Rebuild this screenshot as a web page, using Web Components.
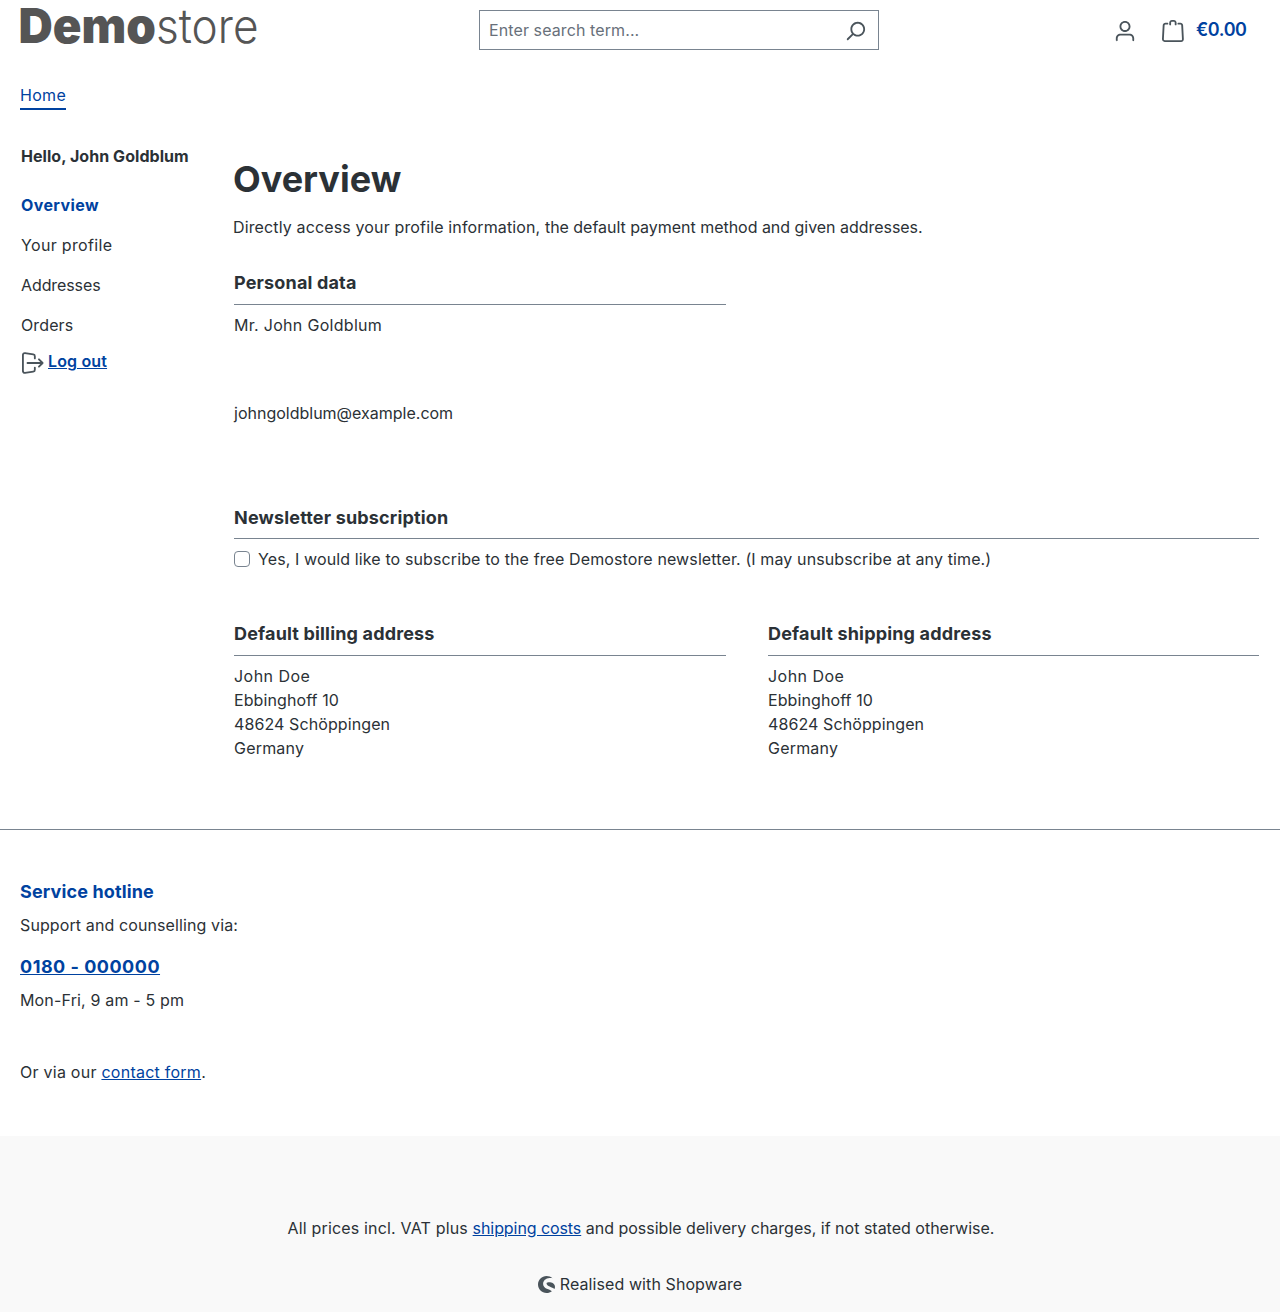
<!DOCTYPE html>
<html lang="en">
<head>
<meta charset="utf-8">
<title>Overview</title>
<style>
body{margin:0;background:#fff;color:#2b3136;font:16px/24px Inter,"Liberation Sans",sans-serif}
</style>
</head>
<body>
<account-page></account-page>
<script>
const define=(name,html)=>{
  const t=document.createElement('template');
  t.innerHTML=html;
  customElements.define(name,class extends HTMLElement{
    constructor(){super();this.attachShadow({mode:'open'}).append(t.content.cloneNode(true));}
  });
};

const ICONS={
  avatar:'<path d="M12 3C9.79 3 8 4.79 8 7s1.79 4 4 4 4-1.79 4-4-1.79-4-4-4zm0-2c3.3137 0 6 2.6863 6 6s-2.6863 6-6 6-6-2.6863-6-6 2.6863-6 6-6zM4 22.099c0 .5523-.4477 1-1 1s-1-.4477-1-1V20c0-2.7614 2.2386-5 5-5h10c2.7614 0 5 2.2386 5 5v2.099c0 .5523-.4477 1-1 1s-1-.4477-1-1V20c0-1.6569-1.3431-3-3-3H7c-1.6569 0-3 1.3431-3 3v2.099z"/>',
  bag:'<path d="M5.892 3c.5523 0 1 .4477 1 1s-.4477 1-1 1H3.7895a1 1 0 0 0-.9986.9475l-.7895 15c-.029.5515.3946 1.0221.9987 1.0525h17.8102c.5523 0 1-.4477.9986-1.0525l-.7895-15A1 1 0 0 0 20.0208 5H17.892c-.5523 0-1-.4477-1-1s.4477-1 1-1h2.1288c1.5956 0 2.912 1.249 2.9959 2.8423l.7894 15c.0035.0788.0035.0788.0042.1577 0 1.6569-1.3432 3-3 3H3c-.079-.0007-.079-.0007-.1577-.0041-1.6546-.0871-2.9253-1.499-2.8382-3.1536l.7895-15C.8775 4.249 2.1939 3 3.7895 3H5.892zm4 2c0 .5523-.4477 1-1 1s-1-.4477-1-1V3c0-1.6569 1.3432-3 3-3h2c1.6569 0 3 1.3431 3 3v2c0 .5523-.4477 1-1 1s-1-.4477-1-1V3c0-.5523-.4477-1-1-1h-2c-.5523 0-1 .4477-1 1v2z"/>',
  search:'<path d="M10.0944 16.3199 4.707 21.707c-.3905.3905-1.0237.3905-1.4142 0-.3905-.3905-.3905-1.0237 0-1.4142L8.68 14.9056C7.6271 13.551 7 11.8487 7 10c0-4.4183 3.5817-8 8-8s8 3.5817 8 8-3.5817 8-8 8c-1.8487 0-3.551-.627-4.9056-1.6801zM15 16c3.3137 0 6-2.6863 6-6s-2.6863-6-6-6-6 2.6863-6 6 2.6863 6 6 6z"/>',
  logout:'<path fill="none" stroke="#4a545b" stroke-width="2" stroke-linecap="round" stroke-linejoin="round" d="M14 7V4.6a2 2 0 0 0-1.7-2L3.3 1.2A2 2 0 0 0 1 3.1v17.8a2 2 0 0 0 2.3 1.9l9-1.4a2 2 0 0 0 1.7-2V17M6 12h16.5M18.5 8l4 4-4 4"/>',
  shopware:'<path d="M20.500 3C18.200 1.100 15.200 0 12 0 5.400 0 0 5.400 0 12s5.400 12 12 12c3 0 5.500-1 7.600-2.600-1.800-1.600-4.600-2.300-7.200-3.400-3-1.200-5.200-3.400-5.200-6.600 0-4.800 3.700-8.300 9-8.600 1.700-.1 3.200-.1 4.300.2z"/><path d="M12 10C14 7.800 24 8.500 24 15.500c0 1.300-.4 2.300-.9 3C20.500 15.600 12 15.200 12 10z"/>'
};
customElements.define('ui-icon',class extends HTMLElement{
  constructor(){super();this.attachShadow({mode:'open'});}
  connectedCallback(){
    this.shadowRoot.innerHTML='<style>:host{display:block;width:22px;height:22px;flex:none}svg{display:block;width:100%;height:100%;fill:#4a545b;overflow:visible}</style><svg viewBox="0 0 24 24">'+ICONS[this.getAttribute('name')]+'</svg>';
  }
});

define('text-link',`<style>:host{display:inline}a{color:#0042a0;text-decoration:underline}</style><a href="#"><slot></slot></a>`);

define('store-logo',`<style>:host{display:block;width:260px;height:64px;margin-left:-8px}svg{display:block;overflow:visible}text{font-family:Inter,sans-serif;font-size:48px;fill:#555}</style>
<svg width="260" height="64"><text x="6.500" y="42.600" font-weight="900" textLength="137.500" lengthAdjust="spacingAndGlyphs">Demo</text><text x="144" y="42.600" font-weight="300" textLength="102.500" lengthAdjust="spacingAndGlyphs">store</text></svg>`);

define('search-box',`<style>:host{display:flex;box-sizing:border-box;width:400px;height:40px;border:1px solid #798490;padding:0 12px 0 9px;align-items:center;justify-content:space-between;color:#68707a;letter-spacing:.1px}ui-icon{margin-top:1px}</style>
<span>Enter search term...</span><ui-icon name="search"></ui-icon>`);

define('store-header',`<style>:host{display:grid;grid-template-columns:459px 400px 1fr;padding:0 33px 0 20px;height:83px;align-items:start;box-sizing:border-box}
search-box{margin-top:10px}.actions{display:flex;justify-content:flex-end;margin-top:18px}.actions ui-icon{margin-top:2px}.actions ui-icon+ui-icon{margin-left:26px}b{box-sizing:border-box;width:63px;white-space:nowrap;color:#0042a0;font-weight:600;font-size:18px;padding-left:12px;letter-spacing:-.4px}</style>
<store-logo></store-logo><search-box></search-box><div class="actions"><ui-icon name="avatar"></ui-icon><ui-icon name="bag"></ui-icon><b>€0.00</b></div>`);

define('main-nav',`<style>:host{display:flex;padding:0 20px;height:61px}a{color:#0042a0;height:25px;border-bottom:2px solid #0042a0;letter-spacing:.3px}</style><a>Home</a>`);

define('account-menu',`<style>:host{display:flex;flex-direction:column;width:192px;flex:none}
.hello{font-weight:700;margin-bottom:25px;white-space:nowrap;letter-spacing:.05px}.item{margin-bottom:16px}.active{color:#0042a0;font-weight:700;letter-spacing:.4px}
.out{display:flex;gap:3px;margin-top:-4px;font-weight:600;letter-spacing:.15px}ui-icon{margin:3px 1px 0 1px}</style>
<div class="hello">Hello, John Goldblum</div><div class="item active">Overview</div><div class="item" style="letter-spacing:.33px">Your profile</div><div class="item" style="letter-spacing:-.1px">Addresses</div><div class="item" style="letter-spacing:.12px">Orders</div>
<div class="out"><ui-icon name="logout"></ui-icon><text-link>Log out</text-link></div>`);

define('info-card',`<style>:host{display:block;min-width:0}.title{font-weight:700;font-size:18px;line-height:27px;padding-bottom:var(--title-pad,8px);border-bottom:1px solid #798490;margin-bottom:8px;letter-spacing:.165px}</style>
<div class="title"><slot name="title"></slot></div><slot></slot>`);

define('check-row',`<style>:host{display:flex;gap:8px;letter-spacing:.115px}i{box-sizing:border-box;width:16px;height:16px;border:1px solid #798490;border-radius:4px;margin-top:4px}</style><i></i><span><slot></slot></span>`);

define('account-overview',`<style>:host{display:block;flex:1;padding-top:8px}
h1{font-size:36px;line-height:54px;font-weight:700;margin:0 0 9px -1px}.lead{margin:0 0 30px -1px;letter-spacing:.055px}
.row{display:grid;grid-template-columns:492px 491px;column-gap:42px}.personal{height:235px}.news{height:116px}.mail{margin-top:64px}.news info-card{width:1025px;--title-pad:7px}
.doe{letter-spacing:.45px}.street{letter-spacing:.1px}.land{letter-spacing:.2px}</style>
<h1>Overview</h1><div class="lead"><span style="letter-spacing:.14px">Directly access your profile information,</span> <span style="letter-spacing:-.03px">the default payment method and given addresses.</span></div>
<div class="row personal"><info-card><span slot="title">Personal data</span><div style="letter-spacing:.3px">Mr. John Goldblum</div><div class="mail">johngoldblum@example.com</div></info-card></div>
<div class="news"><info-card><span slot="title">Newsletter subscription</span><check-row>Yes, I would like to subscribe to the free Demostore newsletter. (I may unsubscribe at any time.)</check-row></info-card></div>
<div class="row"><info-card><span slot="title">Default billing address</span><div class="doe">John Doe</div><div class="street">Ebbinghoff 10</div><div class="street">48624 Schöppingen</div><div class="land">Germany</div></info-card>
<info-card><span slot="title">Default shipping address</span><div class="doe">John Doe</div><div class="street">Ebbinghoff 10</div><div class="street">48624 Schöppingen</div><div class="land">Germany</div></info-card></div>`);

define('store-footer',`<style>:host{display:block;border-top:1px solid #798490}.hotline{height:306px;box-sizing:border-box;padding:48px 20px 0}
.t{font-size:18px;line-height:27px;font-weight:700;color:#0042a0;margin-bottom:8px;letter-spacing:.13px}.phone{font-size:18px;line-height:27px;font-weight:700;margin:16px 0 8px;letter-spacing:.5px}.form{margin-top:48px;letter-spacing:.25px}
.bottom{background:#f9f9f9;height:176px;box-sizing:border-box;padding-top:80px;text-align:center}.prices{padding-left:2px}.brand{display:flex;justify-content:center;gap:5px;margin-top:32px;letter-spacing:.09px}.brand ui-icon{width:17px;height:17px;margin-top:4px}</style>
<div class="hotline"><div class="t">Service hotline</div><div style="letter-spacing:.11px">Support and counselling via:</div><div class="phone"><text-link>0180 - 000000</text-link></div><div style="letter-spacing:.16px">Mon-Fri, 9 am - 5 pm</div><div class="form">Or via our <text-link>contact form</text-link>.</div></div>
<div class="bottom"><div class="prices"><span style="letter-spacing:.17px">All prices incl. VAT plus </span><text-link style="letter-spacing:-.08px">shipping costs</text-link> and possible delivery charges, if not stated otherwise.</div><div class="brand"><ui-icon name="shopware"></ui-icon><span>Realised with Shopware</span></div></div>`);

define('account-page',`<style>:host{display:block;width:1280px;height:1312px;overflow:hidden}.main{display:flex;gap:21px;padding:0 21px;height:685px;box-sizing:border-box}</style>
<store-header></store-header><main-nav></main-nav><div class="main"><account-menu></account-menu><account-overview></account-overview></div><store-footer></store-footer>`);
</script>
</body>
</html>
